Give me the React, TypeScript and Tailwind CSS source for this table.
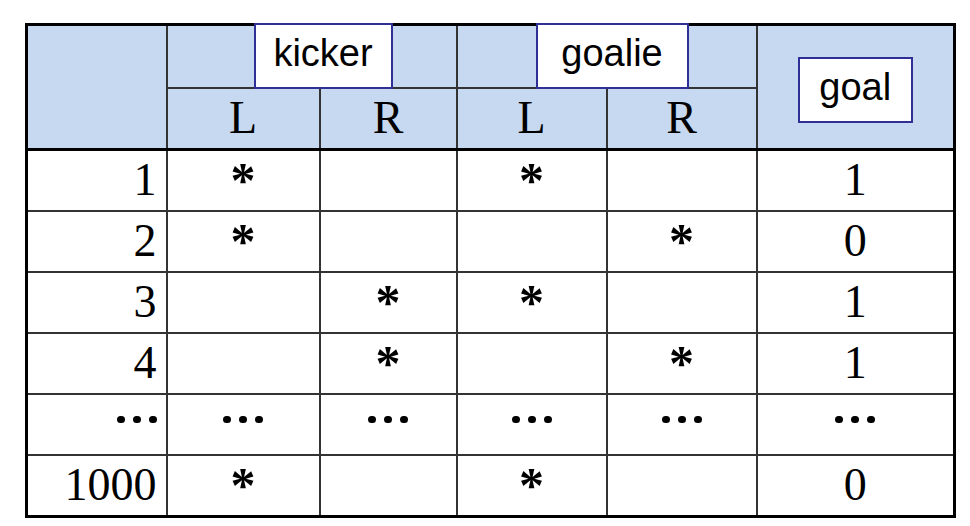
import React from "react"

type Row = {
  n: string
  kL?: boolean
  kR?: boolean
  gL?: boolean
  gR?: boolean
  goal: string
}

const rows: Row[] = [
  { n: "1", kL: true, gL: true, goal: "1" },
  { n: "2", kL: true, gR: true, goal: "0" },
  { n: "3", kR: true, gL: true, goal: "1" },
  { n: "4", kR: true, gR: true, goal: "1" },
  { n: "dots", goal: "dots" },
  { n: "1000", kL: true, gL: true, goal: "0" },
]

const serif = "font-['Liberation_Serif',serif] text-[46px] leading-none text-black"
const sans = "font-['Liberation_Sans',Arial,sans-serif] text-[38px] font-normal leading-none text-black"

function Star() {
  return <div className="h-[30px] text-[50px] font-bold leading-[30px]">*</div>
}

function Dots({ end }: { end?: boolean }) {
  return (
    <div className={`flex items-center gap-[8px] -mt-[8px] ${end ? "justify-end" : "justify-center"}`}>
      <span className="w-[8px] h-[7px] rounded-full bg-black" />
      <span className="w-[8px] h-[7px] rounded-full bg-black" />
      <span className="w-[8px] h-[7px] rounded-full bg-black" />
    </div>
  )
}

function Label({ text, className }: { text: string; className: string }) {
  return (
    <div className={`absolute flex items-center justify-center bg-white border-2 border-[#2f2f96] ${sans} ${className}`}>
      <span className="-mt-[6px]">{text}</span>
    </div>
  )
}

export default function App() {
  const cell = "border-2 border-[#333] text-center align-middle p-0 font-normal"
  return (
    <div className="w-[970px] h-[526px] bg-white pt-[23px] pl-[25px]">
      <table className={`table-fixed border-collapse border-[3px] border-black ${serif}`}>
        <colgroup>
          <col className="w-[140px]" />
          <col className="w-[153px]" />
          <col className="w-[137px]" />
          <col className="w-[150px]" />
          <col className="w-[150px]" />
          <col className="w-[198px]" />
        </colgroup>
        <thead className="bg-[#c6d9f0]">
          <tr className="h-[63px]">
            <th rowSpan={2} className={`${cell} border-b-[3px] border-b-black`} />
            <th colSpan={2} className={`${cell} relative`}>
              <Label text="kicker" className="left-[86px] top-[-3px] w-[139px] h-[66px]" />
            </th>
            <th colSpan={2} className={`${cell} relative`}>
              <Label text="goalie" className="left-[78px] top-[-3px] w-[153px] h-[66px]" />
            </th>
            <th rowSpan={2} className={`${cell} border-b-[3px] border-b-black`}>
              <div className="flex justify-center pt-[6px]">
                <div className={`flex items-center justify-center w-[115px] h-[66px] bg-white border-2 border-[#2f2f96] ${sans}`}>
                  <span className="-mt-[6px]">goal</span>
                </div>
              </div>
            </th>
          </tr>
          <tr className="h-[62px]">
            {["L", "R", "L", "R"].map((t, i) => (
              <th key={i} className={`${cell} border-b-[3px] border-b-black`}>
                <span className="inline-block -mt-[10px]">{t}</span>
              </th>
            ))}
          </tr>
        </thead>
        <tbody>
          {rows.map((r, i) => {
            const dots = r.n === "dots"
            return (
              <tr key={i} className={i === 5 ? "h-[62px]" : "h-[61px]"}>
                <td className={`${cell} text-right pr-[9px]`}>
                  {dots ? <Dots end /> : <span className="inline-block -mt-[6px]">{r.n}</span>}
                </td>
                <td className={cell}>{dots ? <Dots /> : r.kL && <Star />}</td>
                <td className={cell}>{dots ? <Dots /> : r.kR && <Star />}</td>
                <td className={cell}>{dots ? <Dots /> : r.gL && <Star />}</td>
                <td className={cell}>{dots ? <Dots /> : r.gR && <Star />}</td>
                <td className={cell}>
                  {dots ? <Dots /> : <span className="inline-block -mt-[6px]">{r.goal}</span>}
                </td>
              </tr>
            )
          })}
        </tbody>
      </table>
    </div>
  )
}
